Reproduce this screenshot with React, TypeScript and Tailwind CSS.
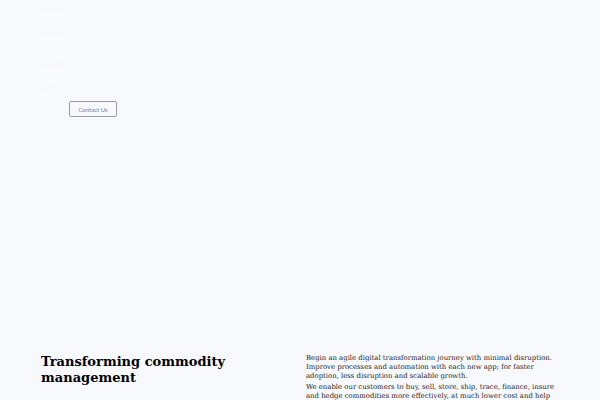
const navItems = [
    { label: "Solutions", indent: "pl-0", gap: "mt-0" },
    { label: "·", indent: "pl-3", gap: "mt-[7px]" },
    { label: "Industries", indent: "pl-0", gap: "mt-0" },
    { label: "Our Customers", indent: "pl-0", gap: "mt-[11px]" },
    { label: "Resources", indent: "pl-0", gap: "mt-[3px]" },
    { label: "About", indent: "pl-0", gap: "mt-[2px]" },
    { label: "Login", indent: "pl-0", gap: "mt-[4px]" },
];

const App = () => {
    return (
        <div className="min-h-screen w-full bg-[#f8f9fd] font-['Lato','Liberation_Sans',sans-serif]">
            <header className="px-10 pt-[8px]">
                <nav className="flex flex-col text-[6px] leading-[9px] text-white">
                    {navItems.map((item) => (
                        <a key={item.label} href="#" className={`${item.indent} ${item.gap}`}>
                            {item.label}
                        </a>
                    ))}
                    <div className="mt-[3px] pl-[29px]">
                        <button
                            type="button"
                            className="h-4 w-12 rounded-[2px] border border-[#9b9ba6] bg-transparent text-[6px] text-[#7b7b95]"
                        >
                            Contact Us
                        </button>
                    </div>
                </nav>
            </header>

            <section className="h-[237px]" />

            <section className="grid grid-cols-2 gap-3 px-[41px] font-['DejaVu_Serif',serif]">
                <h1 className="text-[13px] font-bold leading-[16px] text-black">
                    Transforming commodity
                    <br />
                    management
                </h1>
                <div className="text-[6.9px] leading-[9px] text-[#1a1a1a]">
                    <p>
                        Begin an agile digital transformation journey with minimal disruption. Improve processes and automation with each new app; for faster adoption, less disruption and scalable growth.
                    </p>
                    <p className="mt-[2px]">
                        We enable our customers to buy, sell, store, ship, trace, finance, insure and hedge commodities more effectively, at much lower cost and help them manage risk across the value chain.
                    </p>
                </div>
            </section>
        </div>
    );
};

export default App;
